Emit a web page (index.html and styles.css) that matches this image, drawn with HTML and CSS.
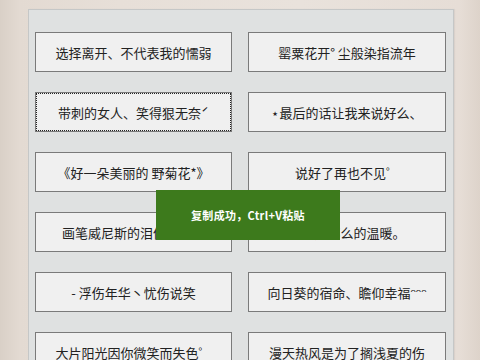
FILE: index.html
```html
<!DOCTYPE html>
<html lang="zh">
<head>
<meta charset="utf-8">
<title>复制</title>
<link rel="stylesheet" href="styles.css">
</head>
<body>
<div class="page">
  <div class="panel">
    <div class="grid">
      <button class="item">选择离开、不代表我的懦弱</button>
      <button class="item">罂粟花开° 尘般染指流年</button>
      <button class="item focus">带刺的女人、笑得狠无奈ˊ</button>
      <button class="item">⋆最后的话让我来说好么、</button>
      <button class="item">《好一朵美丽的 野菊花*》</button>
      <button class="item">说好了再也不见゜</button>
      <button class="item">画笔威尼斯的泪像何处寻</button>
      <button class="item">曾经是那么的温暖。</button>
      <button class="item">- 浮伤年华丶忧伤说笑</button>
      <button class="item">向日葵的宿命、瞻仰幸福ᵔᵔᵔ</button>
      <button class="item">大片阳光因你微笑而失色゜</button>
      <button class="item">漫天热风是为了搁浅夏的伤</button>
    </div>
  </div>
</div>
<div class="toast">复制成功，Ctrl+V粘贴</div>
</body>
</html>
```
FILE: styles.css
```css
html, body {
  margin: 0;
  padding: 0;
  height: 360px;
  overflow: hidden;
}
body {
  background: linear-gradient(90deg, #d9d0c7 0px, #e3dad2 20px, #e7dfd8 120px, #e9e2dc 300px, #e6ddd6 460px, #ddd3ca 480px);
  font-family: "Noto Sans CJK SC", "Noto Sans", sans-serif;
}
.page {
  padding: 9px 26px 0 28px;
}
.panel {
  background: #dfe1e1;
  border: 1px solid #c5c7c7;
  border-bottom: none;
  padding: 22px 0 40px 6px;
  box-shadow: 1px 0 1px rgba(0,0,0,0.05);
}
.grid {
  display: grid;
  grid-template-columns: 197px 198px;
  column-gap: 16px;
  row-gap: 20px;
}
.item {
  height: 40px;
  margin: 0;
  padding: 0;
  background: #f0f0f0;
  border: 1px solid #7a7a7a;
  border-radius: 0;
  font-family: "Noto Sans CJK SC", "Noto Sans", sans-serif;
  font-size: 13px;
  color: #222;
  text-align: center;
  white-space: nowrap;
  overflow: hidden;
}
.focus {
  outline: 1px dotted #222;
  outline-offset: -2px;
}
.toast {
  position: absolute;
  left: 156px;
  top: 190px;
  width: 184px;
  height: 50px;
  background: #3d7a1c;
  color: #fff;
  font-size: 11px;
  font-weight: bold;
  display: flex;
  align-items: center;
  justify-content: center;
  letter-spacing: 0.3px;
}
```
